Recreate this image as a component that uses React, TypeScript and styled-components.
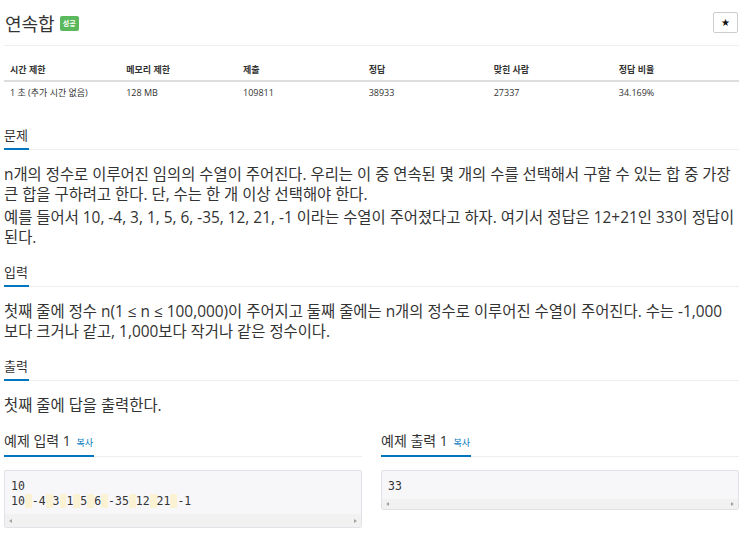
import styled, { createGlobalStyle } from "styled-components";

const GlobalStyle = createGlobalStyle`
  body {
    margin: 0;
    background: #fff;
    color: #333;
    font-family: "Open Sans", "Noto Sans CJK KR", sans-serif;
  }
`

const stats = [
    {label: "시간 제한", value: "1 초 (추가 시간 없음)", width: 117},
    {label: "메모리 제한", value: "128 MB", width: 117},
    {label: "제출", value: "109811", width: 125},
    {label: "정답", value: "38933", width: 125},
    {label: "맞힌 사람", value: "27337", width: 125},
    {label: "정답 비율", value: "34.169%", width: 125},
]

const sampleInput = ["10", "10 -4 3 1 5 6 -35 12 21 -1"]

// spaces in sample data are shown with a yellow mark
const renderLine = (line: string) =>
    line.split(" ").map((word, i, arr) => (
        <span key={i}>
            {word}
            {i < arr.length - 1 && <Space> </Space>}
        </span>
    ))

export default function App() {
    return (
        <Page>
            <GlobalStyle/>
            <TitleBar>
                <Title>
                    연속합
                    <Badge>성공</Badge>
                </Title>
                <StarButton>★</StarButton>
            </TitleBar>

            <StatsTable>
                <thead>
                <tr>
                    {stats.map(s => <Th key={s.label} $w={s.width}>{s.label}</Th>)}
                </tr>
                </thead>
                <tbody>
                <tr>
                    {stats.map(s => <Td key={s.label}>{s.value}</Td>)}
                </tr>
                </tbody>
            </StatsTable>

            <Section>
                <SectionHead><HeadTitle>문제</HeadTitle></SectionHead>
                <Text>n개의 정수로 이루어진 임의의 수열이 주어진다. 우리는 이 중 연속된 몇 개의 수를 선택해서 구할 수 있는 합 중 가장 큰 합을 구하려고 한다. 단, 수는 한 개 이상 선택해야 한다.</Text>
                <Text>예를 들어서 10, -4, 3, 1, 5, 6, -35, 12, 21, -1 이라는 수열이 주어졌다고 하자. 여기서 정답은 12+21인 33이 정답이 된다.</Text>
            </Section>

            <Section>
                <SectionHead><HeadTitle>입력</HeadTitle></SectionHead>
                <Text>첫째 줄에 정수 n(1 ≤ n ≤ 100,000)이 주어지고 둘째 줄에는 n개의 정수로 이루어진 수열이 주어진다. 수는 -1,000<Keep>보다</Keep> 크거나 같고, 1,000보다 작거나 같은 정수이다.</Text>
            </Section>

            <Section>
                <SectionHead><HeadTitle>출력</HeadTitle></SectionHead>
                <Text>첫째 줄에 답을 출력한다.</Text>
            </Section>

            <Samples>
                <div>
                    <SampleHead>
                        <HeadTitle $big>예제 입력 1 <CopyLink>복사</CopyLink></HeadTitle>
                    </SampleHead>
                    <CodeBox>
                        <Code>
                            {sampleInput.map((l, i) => <div key={i}>{renderLine(l)}</div>)}
                        </Code>
                        <ScrollTrack $h={13}><ArrowLeft/><ArrowRight/></ScrollTrack>
                    </CodeBox>
                </div>
                <div>
                    <SampleHead>
                        <HeadTitle $big>예제 출력 1 <CopyLink>복사</CopyLink></HeadTitle>
                    </SampleHead>
                    <CodeBox>
                        <Code><div>33</div></Code>
                        <ScrollTrack $h={10}><ArrowLeft/><ArrowRight/></ScrollTrack>
                    </CodeBox>
                </div>
            </Samples>
        </Page>
    );
}

const Page = styled.div`
  padding: 0 11px 0 4px;
`

const TitleBar = styled.div`
  display: flex;
  align-items: center;
  justify-content: space-between;
  height: 46px;
  box-sizing: border-box;
  border-bottom: 1px solid #eee;
`

const Title = styled.h1`
  margin: 0 0 0 1px;
  display: flex;
  align-items: center;
  gap: 5px;
  font-size: 18px;
  font-weight: 400;
  color: #333;
`

const Badge = styled.span`
  display: inline-block;
  height: 15px;
  line-height: 15px;
  padding: 0 3px;
  margin-top: 2px;
  border-radius: 2px;
  background: #5cb85c;
  color: #fff;
  font-size: 7px;
  font-weight: 700;
`

const StarButton = styled.button`
  width: 25px;
  height: 21px;
  margin-right: 1px;
  padding: 0;
  display: flex;
  align-items: center;
  justify-content: center;
  background: #fff;
  border: 1px solid #ccc;
  border-radius: 2px;
  color: #111;
  font-size: 10px;
  font-family: "DejaVu Sans", sans-serif;
`

const StatsTable = styled.table`
  width: 100%;
  border-collapse: collapse;
  margin: 12px 0 20px;
  font-size: 9px;
  color: #333;
`

const Th = styled.th<{ $w: number }>`
  width: ${p => p.$w}px;
  height: 22px;
  padding: 0 6px;
  text-align: left;
  font-weight: 700;
  border-bottom: 2px solid #ddd;
`

const Td = styled.td`
  height: 21px;
  padding: 0 6px;
`

const Section = styled.section`
  margin-top: 12px;
`

const SectionHead = styled.div`
  display: flex;
  border-bottom: 1px solid #eee;
  margin-bottom: 15px;
`

const SampleHead = styled(SectionHead)`
  margin-bottom: 13px;
`

const HeadTitle = styled.h2<{ $big?: boolean }>`
  margin: 0 0 -1px;
  padding-right: 1px;
  font-size: ${p => (p.$big ? 14 : 13)}px;
  font-weight: 400;
  line-height: 25px;
  color: #333;
  border-bottom: 2px solid #0076c0;
  white-space: nowrap;
`

const CopyLink = styled.span`
  margin-left: 2px;
  font-size: 9px;
  color: #0076c0;
`

const Text = styled.p`
  margin: 0 0 3px;
  font-size: 15.4px;
  line-height: 20px;
`

const Keep = styled.span`
  white-space: nowrap;
`

const Samples = styled.div`
  display: grid;
  grid-template-columns: 1fr 1fr;
  gap: 19px;
  margin-top: 12px;
`

const CodeBox = styled.div`
  background: #f7f7f9;
  border: 1px solid #e1e1e8;
  border-radius: 2px;
`

const Code = styled.pre`
  margin: 0;
  padding: 8px 6px 5px;
  font-family: "DejaVu Sans Mono", monospace;
  font-size: 11.5px;
  line-height: 15px;
  color: #333;
`

const Space = styled.span`
  background: #fbf1d3;
`

const ScrollTrack = styled.div<{ $h: number }>`
  height: ${p => p.$h}px;
  background: #f1f1f1;
  display: flex;
  align-items: center;
  justify-content: space-between;
  padding: 0 4px;
`

const ArrowLeft = styled.span`
  width: 0;
  height: 0;
  border-top: 2.5px solid transparent;
  border-bottom: 2.5px solid transparent;
  border-right: 3px solid #a3a3a3;
`

const ArrowRight = styled(ArrowLeft)`
  border-right: none;
  border-left: 3px solid #a3a3a3;
`
